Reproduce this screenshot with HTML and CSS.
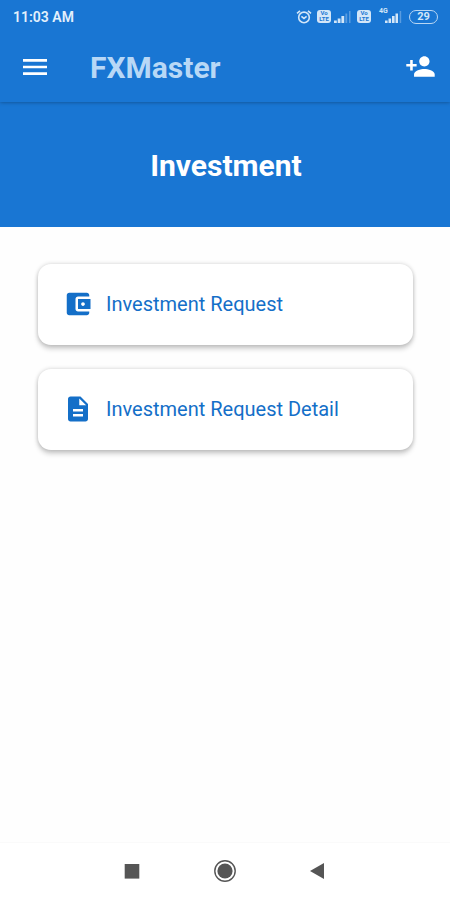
FILE: index.html
```
<!DOCTYPE html>
<html lang="en">
<head>
  <meta charset="UTF-8">
  <meta name="viewport" content="width=device-width, initial-scale=1.0">
  <title>FXMaster</title>
  <link rel="stylesheet" href="styles.css">
</head>
<body>

  <header class="app-header">
    <div class="status-bar">
      <span class="clock">11:03 AM</span>
      <div class="status-icons">
        <svg class="alarm" width="16" height="16" viewBox="0 0 16 16" fill="none" stroke="currentColor" stroke-width="1.6">
          <circle cx="8" cy="8.4" r="5.3"/>
          <path d="M1 4.3L4 1.8M15 4.3L12 1.8M5.4 7.4L8 9.4L10.6 7.4"/>
        </svg>
        <span class="volte">Vo<br>LTE</span>
        <svg class="signal" width="17" height="12" viewBox="0 0 17 12" fill="currentColor">
          <path d="M0 9.5h2.8V12H0zM3.7 7.5h2.8V12H3.7zM7.4 5h2.8v7H7.4z"/>
          <path opacity=".35" d="M11.4 2.5h1.8V12h-1.8zM15 0h1.5v12H15z"/>
        </svg>
        <span class="volte second">Vo<br>LTE</span>
        <div class="network">
          <span class="network-type">4G</span>
          <svg width="17" height="12" viewBox="0 0 17 12" fill="currentColor">
            <path d="M0 9.5h2.6V12H0zM3.5 7.5h2.6V12H3.5zM7 5h2.6v7H7zM10.5 2.5h2.5V12h-2.5z"/>
            <path opacity=".35" d="M14.7 0h1.5v12h-1.5z"/>
          </svg>
        </div>
        <span class="battery">29</span>
      </div>
    </div>

    <nav class="toolbar">
      <svg class="menu-icon" width="32" height="32" viewBox="0 0 24 24" fill="currentColor">
        <path d="M3 18h18v-2H3v2zm0-5h18v-2H3v2zm0-7v2h18V6H3z"/>
      </svg>
      <span class="brand">FXMaster</span>
      <svg class="add-icon" width="31" height="31" viewBox="0 0 24 24" fill="currentColor">
        <path d="M15 12c2.21 0 4-1.79 4-4s-1.79-4-4-4-4 1.79-4 4 1.79 4 4 4zm-9-2V7H4v3H1v2h3v3h2v-3h3v-2H6zm9 4c-2.67 0-8 1.34-8 4v2h16v-2c0-2.66-5.33-4-8-4z"/>
      </svg>
    </nav>
  </header>

  <div class="page-title">
    <h1>Investment</h1>
  </div>

  <main class="card-list">
    <a class="card">
      <svg width="30" height="30" viewBox="0 0 24 24" fill="currentColor">
        <path d="M21 18v1c0 1.1-.9 2-2 2H5c-1.11 0-2-.9-2-2V5c0-1.1.89-2 2-2h14c1.1 0 2 .9 2 2v1h-9c-1.11 0-2 .9-2 2v8c0 1.1.89 2 2 2h9zm-9-2h10V8H12v8zm4-2.5c-.83 0-1.5-.67-1.5-1.5s.67-1.5 1.5-1.5 1.5.67 1.5 1.5-.67 1.5-1.5 1.5z"/>
      </svg>
      <span>Investment Request</span>
    </a>
    <a class="card">
      <svg width="30" height="30" viewBox="0 0 24 24" fill="currentColor">
        <path d="M14 2H6c-1.1 0-1.99.9-1.99 2L4 20c0 1.1.89 2 1.99 2H18c1.1 0 2-.9 2-2V8l-6-6zm2 16H8v-2h8v2zm0-4H8v-2h8v2zm-3-5V3.5L18.5 9H13z"/>
      </svg>
      <span>Investment Request Detail</span>
    </a>
  </main>

  <footer class="system-nav">
    <svg width="24" height="24" viewBox="0 0 24 24">
      <rect x="4.7" y="5" width="14.6" height="14.6"/>
    </svg>
    <svg width="24" height="24" viewBox="0 0 24 24">
      <circle cx="12" cy="12" r="10.2" fill="none" stroke="#555" stroke-width="1.4"/>
      <circle cx="12" cy="12" r="7.6"/>
    </svg>
    <svg width="24" height="24" viewBox="0 0 24 24">
      <path d="M4 12L18 4v16z"/>
    </svg>
  </footer>

</body>
</html>
```

FILE: styles.css
```
body {
  font-family: Roboto, "Liberation Sans", sans-serif;
  margin: 0;
  height: 900px;
  display: flex;
  flex-direction: column;
  background-color: #fefefe;
  overflow: hidden;
}
.app-header {
  position: relative;
  height: 102px;
  background-color: #1976d3;
  color: white;
  box-shadow: 0 0 4px rgba(0, 0, 0, 0.4);
}
.status-bar {
  display: flex;
  justify-content: space-between;
  align-items: center;
  height: 33px;
  padding: 0 12px 0 13px;
}
.clock {
  font-size: 14px;
  font-weight: 600;
  color: #e3f0fc;
}
.status-icons {
  display: flex;
  align-items: center;
  color: #d3e6f8;
}
.volte {
  width: 14px;
  height: 13px;
  margin-left: 5px;
  border-radius: 3px;
  background-color: #d3e6f8;
  color: #1976d3;
  font-size: 6px;
  font-weight: 700;
  line-height: 6px;
  text-align: center;
}
.volte.second {
  margin-left: 6px;
}
.signal {
  margin: 1px 0 0 3px;
}
.network {
  display: flex;
  position: relative;
  margin: 1px 0 0 14px;
}
.network-type {
  position: absolute;
  left: -6px;
  top: -3px;
  font-size: 7px;
  font-weight: 700;
  line-height: 7px;
}
.battery {
  box-sizing: border-box;
  width: 29px;
  height: 14px;
  margin-left: 7px;
  border: 1.5px solid #b9d7f3;
  border-radius: 7px;
  font-size: 11px;
  font-weight: 700;
  line-height: 12px;
  text-align: center;
}
.toolbar {
  display: flex;
  align-items: center;
  height: 67px;
  padding: 0 14px 0 19px;
}
.brand {
  margin: 2px 0 0 39px;
  font-size: 30px;
  font-weight: 700;
  color: #b8d8f6;
}
.add-icon {
  margin-left: auto;
}
.page-title {
  display: flex;
  justify-content: center;
  align-items: center;
  height: 125px;
  background-color: #1976d3;
}
.page-title h1 {
  margin: 1px 0 0 2px;
  font-size: 30px;
  font-weight: 700;
  color: white;
}
.card-list {
  flex: 1;
  display: flex;
  flex-direction: column;
  gap: 24px;
  padding: 37px 37px 0 38px;
}
.card {
  box-sizing: border-box;
  display: flex;
  align-items: center;
  gap: 13px;
  height: 81px;
  padding: 0 0 1px 25px;
  border-radius: 13px;
  background-color: white;
  color: #146fc8;
  font-size: 20px;
  box-shadow: 0 4px 5px rgba(0, 0, 0, 0.18), 0 0 4px rgba(0, 0, 0, 0.18);
}
.card span {
  margin-bottom: 1px;
}
.system-nav {
  box-sizing: border-box;
  display: flex;
  justify-content: center;
  align-items: center;
  gap: 69px;
  height: 58px;
  padding-bottom: 1px;
  background-color: white;
  border-top: 1px solid #fafafa;
  fill: #555;
}
```
